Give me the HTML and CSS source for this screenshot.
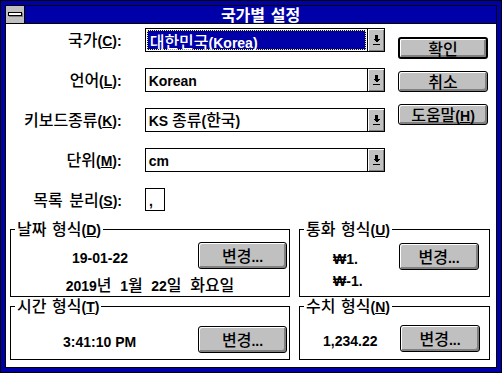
FILE: index.html
```html
<!DOCTYPE html>
<html>
<head>
    <title>국가별 설정</title>
    <link rel="stylesheet" href="styles.css">
</head>
<body>
    <div class="window">
        <div class="frame">
            <div class="titlebar">
                <div class="sysmenu"><span class="sysbar"></span></div>
                <div class="title">국가별 설정</div>
            </div>

            <div class="client">
                <div class="top">
                    <div class="fields">
                        <div class="field">
                            <label>국가<span class="l">(<u>C</u>):</span></label>
                            <div class="combo">
                                <span class="value selected">대한민국<span class="l">(Korea)</span></span>
                                <span class="drop"><svg width="7" height="10" viewBox="0 0 7 10" shape-rendering="crispEdges"><rect x="2" y="0" width="3" height="4"/><polygon points="0,4 7,4 3.5,7.5"/><rect x="0" y="9" width="7" height="1"/></svg></span>
                            </div>
                        </div>
                        <div class="field">
                            <label>언어<span class="l">(<u>L</u>):</span></label>
                            <div class="combo">
                                <span class="value"><span class="l">Korean</span></span>
                                <span class="drop"><svg width="7" height="10" viewBox="0 0 7 10" shape-rendering="crispEdges"><rect x="2" y="0" width="3" height="4"/><polygon points="0,4 7,4 3.5,7.5"/><rect x="0" y="9" width="7" height="1"/></svg></span>
                            </div>
                        </div>
                        <div class="field">
                            <label>키보드종류<span class="l">(<u>K</u>):</span></label>
                            <div class="combo">
                                <span class="value"><span class="l">KS </span>종류<span class="l">(</span>한국<span class="l">)</span></span>
                                <span class="drop"><svg width="7" height="10" viewBox="0 0 7 10" shape-rendering="crispEdges"><rect x="2" y="0" width="3" height="4"/><polygon points="0,4 7,4 3.5,7.5"/><rect x="0" y="9" width="7" height="1"/></svg></span>
                            </div>
                        </div>
                        <div class="field">
                            <label>단위<span class="l">(<u>M</u>):</span></label>
                            <div class="combo">
                                <span class="value"><span class="l">cm</span></span>
                                <span class="drop"><svg width="7" height="10" viewBox="0 0 7 10" shape-rendering="crispEdges"><rect x="2" y="0" width="3" height="4"/><polygon points="0,4 7,4 3.5,7.5"/><rect x="0" y="9" width="7" height="1"/></svg></span>
                            </div>
                        </div>
                        <div class="field">
                            <label>목록 분리<span class="l">(<u>S</u>):</span></label>
                            <div class="sep-box"><span class="l">,</span></div>
                        </div>
                    </div>

                    <div class="buttons">
                        <div class="btn default">확인</div>
                        <div class="btn">취소</div>
                        <div class="btn">도움말<span class="l">(<u>H</u>)</span></div>
                    </div>
                </div>

                <div class="groups">
                    <fieldset class="group date">
                        <legend>날짜 형식<span class="l">(<u>D</u>)</span></legend>
                        <div class="row">
                            <span class="text"><span class="l">19-01-22</span></span>
                            <div class="btn change">변경<span class="l">...</span></div>
                        </div>
                        <div class="long-date"><span class="l">2019</span>년 <span class="l">1</span>월 <span class="l">22</span>일 화요일</div>
                    </fieldset>

                    <fieldset class="group currency">
                        <legend>통화 형식<span class="l">(<u>U</u>)</span></legend>
                        <div class="row">
                            <span class="text"><span class="l">₩1.</span></span>
                            <div class="btn change">변경<span class="l">...</span></div>
                        </div>
                        <div class="neg"><span class="l">₩-1.</span></div>
                    </fieldset>

                    <fieldset class="group time">
                        <legend>시간 형식<span class="l">(<u>T</u>)</span></legend>
                        <div class="row">
                            <span class="text"><span class="l">3:41:10 PM</span></span>
                            <div class="btn change">변경<span class="l">...</span></div>
                        </div>
                    </fieldset>

                    <fieldset class="group number">
                        <legend>수치 형식<span class="l">(<u>N</u>)</span></legend>
                        <div class="row">
                            <span class="text"><span class="l">1,234.22</span></span>
                            <div class="btn change">변경<span class="l">...</span></div>
                        </div>
                    </fieldset>
                </div>
            </div>
        </div>
    </div>
</body>
</html>
```

FILE: styles.css
```css
/* Base */
* {
    margin: 0;
    padding: 0;
    box-sizing: border-box;
}

body {
    margin: 0;
    background-color: #0000a8;
    font-family: "Noto Sans CJK KR", sans-serif;
    font-size: 16px;
    font-weight: 500;
    color: #000;
}

/* latin runs use the bold system look */
.l {
    font-family: "Liberation Sans", "Noto Sans CJK KR", sans-serif;
    font-size: 14px;
    font-weight: bold;
}

u {
    text-decoration: underline;
    text-underline-offset: 1px;
}

/* Window frame */
.window {
    width: 502px;
    height: 373px;
    border: 1px solid #000;
    background-color: #0000a8;
    padding: 4px;
}

.frame {
    height: 100%;
    border: 1px solid #000;
    background-color: #fff;
}

.titlebar {
    display: flex;
    height: 18px;
    border-bottom: 1px solid #000;
    background-color: #0000a8;
}

.sysmenu {
    width: 19px;
    background-color: #c0c0c0;
    border-right: 1px solid #000;
}

.sysbar {
    display: block;
    width: 14px;
    height: 4px;
    margin: 6px 0 0 2px;
    border: 1px solid #000;
    background-color: #fff;
    box-shadow: 1px 1px 0 #808080;
}

.title {
    flex: 1;
    text-align: center;
    color: #fff;
    font-weight: bold;
    font-size: 16px;
    line-height: 17px;
    word-spacing: 2px;
}

/* Client area */
.client {
    padding-top: 4px;
}

.top {
    display: flex;
}

.fields {
    width: 379px;
    display: flex;
    flex-direction: column;
    gap: 16px;
}

.field {
    display: flex;
    align-items: center;
    height: 24px;
}

.field label {
    width: 116px;
    text-align: right;
    margin-right: 23px;
    line-height: 20px;
    word-spacing: 3px;
}

.combo {
    width: 241px;
    height: 24px;
    border: 1px solid #000;
    display: flex;
}

.combo .value {
    flex: 1;
    padding-left: 3px;
    line-height: 20px;
}

.combo .value.selected {
    margin: 1px;
    padding-left: 2px;
    background-color: #0000a8;
    color: #fff;
    border: 1px dotted #ffff54;
}

.combo .drop {
    width: 17px;
    border-left: 1px solid #000;
    background-color: #c0c0c0;
    box-shadow: inset 1px 1px #fff, inset -1px -1px #808080;
    display: flex;
    align-items: center;
    justify-content: center;
}

.sep-box {
    width: 20px;
    height: 23px;
    align-self: flex-start;
    border: 1px solid #000;
    padding-left: 3px;
    line-height: 21px;
}

/* Command buttons */
.buttons {
    margin-left: 13px;
    padding-top: 9px;
    display: flex;
    flex-direction: column;
    gap: 12px;
}

.btn {
    width: 90px;
    height: 21px;
    border: 1px solid #000;
    border-radius: 3px;
    background-color: #c0c0c0;
    box-shadow: inset 1px 1px #fff, inset -2px -2px #808080;
    text-align: center;
    line-height: 18px;
}

.btn.default {
    height: 22px;
    border-width: 2px;
}

/* Group boxes */
.groups {
    display: grid;
    grid-template-columns: 280px 191px;
    grid-template-rows: 77px 63px;
    column-gap: 9px;
    margin: 8px 0 0 4px;
}

.group {
    border: 1px solid #000;
    min-width: 0;
}

.group legend {
    margin-left: 4px;
    padding: 0 2px;
    line-height: 16px;
    word-spacing: 2px;
}

.row {
    display: flex;
    align-items: center;
}

.btn.change {
    height: 27px;
    line-height: 24px;
}

.date .row {
    margin-top: 4px;
}

.date .text {
    width: 187px;
    padding-left: 61px;
}

.date .btn.change,
.time .btn.change {
    width: 89px;
}

.long-date {
    margin-top: 7px;
    text-align: center;
    line-height: 16px;
    word-spacing: 5px;
}

.currency .row {
    margin-top: 5px;
}

.currency .text {
    width: 99px;
    padding-left: 33px;
}

.currency .btn.change,
.number .btn.change {
    width: 80px;
}

.neg {
    margin-top: 1px;
    padding-left: 33px;
    line-height: 16px;
}

.time .row {
    margin-top: 11px;
}

.time .text {
    width: 187px;
    padding-left: 52px;
}

.number .row {
    margin-top: 10px;
}

.number .text {
    width: 100px;
    padding-left: 23px;
}
```
